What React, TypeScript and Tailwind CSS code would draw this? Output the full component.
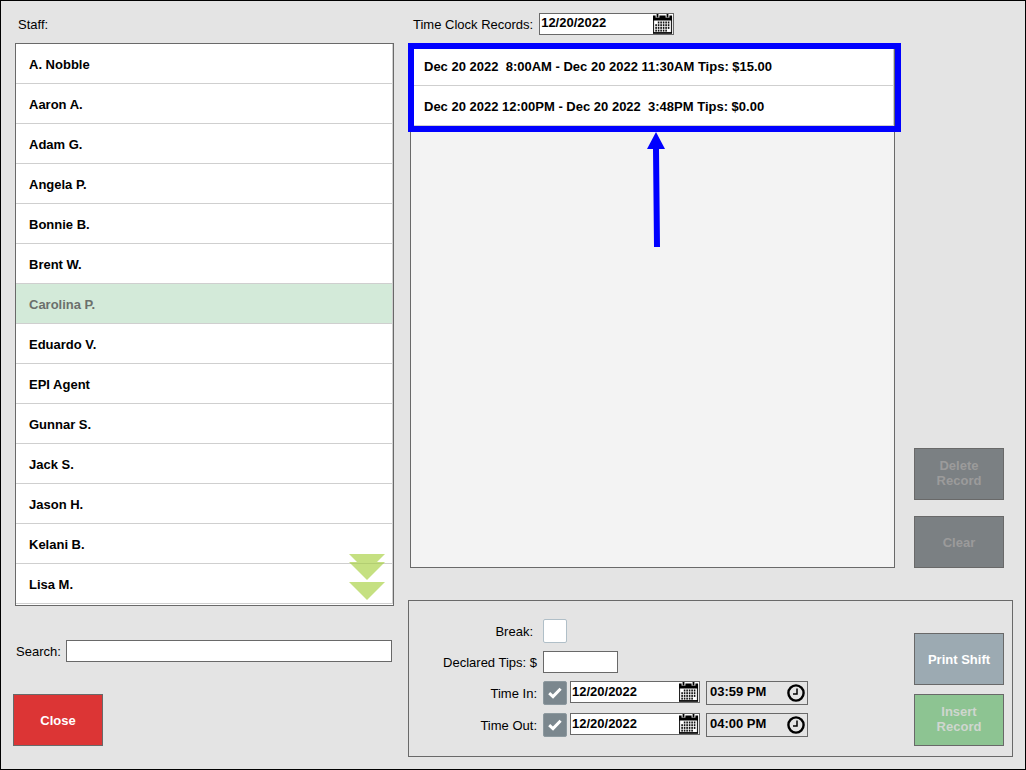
import { useState } from 'react';

const staffList = [
  'A. Nobble',
  'Aaron A.',
  'Adam G.',
  'Angela P.',
  'Bonnie B.',
  'Brent W.',
  'Carolina P.',
  'Eduardo V.',
  'EPI Agent',
  'Gunnar S.',
  'Jack S.',
  'Jason H.',
  'Kelani B.',
  'Lisa M.',
];

const records = [
  'Dec 20 2022  8:00AM - Dec 20 2022 11:30AM Tips: $15.00',
  'Dec 20 2022 12:00PM - Dec 20 2022  3:48PM Tips: $0.00',
];

// first and last column of the days filled in on each week row
const weeks = [
  [1, 5],
  [0, 5],
  [0, 5],
  [0, 4],
];

const CalendarIcon = () => (
  <svg className="size-5" viewBox="0 0 20 20" aria-hidden="true">
    <rect x="0.5" y="3" width="18" height="16" fill="#fff" stroke="#222" strokeWidth="1.2" />
    <rect x="0" y="1.5" width="19" height="5" fill="#000" />
    <rect x="0" y="18.2" width="19" height="1.4" fill="#000" />
    <rect x="2.6" y="0" width="3.8" height="3.6" fill="#fff" />
    <rect x="12.6" y="0" width="3.8" height="3.6" fill="#fff" />
    <rect x="3.6" y="0" width="1.8" height="3.4" fill="#000" />
    <rect x="13.6" y="0" width="1.8" height="3.4" fill="#000" />
    {weeks.map(([from, to], row) =>
      [0, 1, 2, 3, 4, 5].filter((col) => col >= from && col <= to).map((col) => (
        <rect key={`${row}-${col}`} x={2.3 + col * 2.5} y={7.5 + row * 2.7} width="1.6" height="2" fill="#111" />
      ))
    )}
  </svg>
);

const ClockIcon = () => (
  <svg className="size-[18px]" viewBox="0 0 18 18" fill="none" stroke="#000" aria-hidden="true">
    <circle cx="9" cy="9" r="7.6" strokeWidth="2.4" />
    <path d="M10 4.5V10H6" strokeWidth="1.5" />
  </svg>
);

const DateField = ({ label, id, className }: { label: string; id: string; className: string }) => (
  <div className={`flex h-[22px] items-center border border-[#696969] bg-white ${className}`}>
    <input id={id} aria-label={label} defaultValue="12/20/2022" className="h-full min-w-0 flex-1 px-px pb-0.5 font-bold outline-none" />
    <button type="button" aria-label={`Pick ${label}`}><CalendarIcon /></button>
  </div>
);

const TimeRow = ({ label, id, time }: { label: string; id: string; time: string }) => (
  <>
    <label htmlFor={id} className="pt-0.5 pr-1.5 text-right">{label}:</label>
    <div className="flex h-6 items-start">
      <span className="relative mr-[3px] size-6">
        <input id={id} type="checkbox" defaultChecked className="block size-6 appearance-none rounded-xs border border-[#8d999f] bg-[#7b878e]" />
        <svg className="pointer-events-none absolute left-[5px] top-[6px] h-3 w-[14px]" viewBox="0 0 14 12" fill="none" stroke="#fff" strokeWidth="3" aria-hidden="true">
          <path d="M1.2 6.2L5 9.6L12.6 1.8" />
        </svg>
      </span>
      <DateField id={`${id}-date`} label={`${label} date`} className="w-[130px]" />
      <div className="ml-1.5 flex h-6 w-[102px] items-center border border-[#696969]">
        <input aria-label={`${label} time`} defaultValue={time} className="h-full min-w-0 flex-1 px-[3px] pb-1 font-bold outline-none" />
        <button type="button" aria-label={`Pick ${label} time`} className="mr-0.5"><ClockIcon /></button>
      </div>
    </div>
  </>
);

const actionButton = 'h-[52px] w-[90px] border border-[#696969] px-3 leading-[15px] font-bold';

const App = () => {
  const [selected, setSelected] = useState('Carolina P.');

  return (
    <main className="flex min-h-screen gap-3.5 border border-black bg-[#e4e4e4] px-3 font-['Liberation_Sans',Arial,sans-serif] text-[13px] leading-4 text-black">
      <section className="flex w-[38.1%] flex-col">
        <h2 className="flex h-[42px] items-center pt-1.5 pl-[5px]">Staff:</h2>
        <div className="relative ml-0.5 border border-[#696969] bg-white pb-px">
          <ul>
            {staffList.map((name) => (
              <li key={name}>
                <button
                  onClick={() => setSelected(name)}
                  className={`block h-10 w-full border-r border-b border-[#cfcfcf] px-[13px] pt-0.5 text-left font-bold ${name === selected ? 'bg-[#d3ead9] text-[#6b706c]' : ''}`}
                >
                  {name}
                </button>
              </li>
            ))}
          </ul>
          <button aria-label="Scroll down" className="absolute right-2 bottom-[5px]">
            <svg className="block h-[46px] w-9" viewBox="0 0 36 46" fill="#c5e081" aria-hidden="true">
              <path d="M0 0H36L28 8H36L18 26L0 8H8Z" />
              <path d="M0 28H36L18 46Z" />
              <path d="M1.5 9.5H34.5" stroke="#b3ce72" />
            </svg>
          </button>
        </div>
        <div className="mt-[34px] flex items-center gap-[5px] pr-0.5 pl-[3px]">
          <label htmlFor="search" className="pt-0.5">Search:</label>
          <input id="search" className="h-[22px] min-w-0 flex-1 border border-[#696969] bg-white px-1" />
        </div>
        <button className={`${actionButton} mt-8 bg-[#dc3535] text-white`}>Close</button>
      </section>

      <section className="flex flex-1 flex-col pb-3">
        <div className="flex h-11 items-center gap-1.5 pt-px pl-[5px]">
          <label htmlFor="record-date" className="pt-0.5">Time Clock Records:</label>
          <DateField id="record-date" label="record date" className="w-[135px]" />
        </div>
        <div className="flex flex-1 items-stretch pr-[9px] pl-0.5">
          <div className="relative flex-1 border border-[#696969] bg-[#f3f3f3]">
            <ul>
              {records.map((record) => (
                <li key={record}>
                  <button className="block h-10 w-full border-r border-b border-[#cfcfcf] bg-white px-[13px] pt-0.5 text-left font-bold whitespace-pre">
                    {record}
                  </button>
                </li>
              ))}
            </ul>
            {/* callout around the records */}
            <div className="pointer-events-none absolute -top-[3px] -right-[7px] -left-[3px] h-[89px] border-[6px] border-[#0000ff]" />
            <svg className="pointer-events-none absolute top-[86px] left-1/2 h-[115px] w-[18px] -translate-x-[6px]" viewBox="0 0 18 115" fill="#0000ff" aria-hidden="true">
              <path d="M9 0L18 17H12L13 115H7L6 17H0Z" />
            </svg>
          </div>
          <div className="ml-[19px] flex flex-col justify-end gap-4">
            <button disabled className={`${actionButton} bg-[#7b8083] pb-0.5 text-[#9b9b9b]`}>Delete Record</button>
            <button disabled className={`${actionButton} bg-[#7b8083] text-[#9b9b9b]`}>Clear</button>
          </div>
        </div>

        <form className="mt-8 flex justify-between border border-[#696969] pt-[18px] pr-2" onSubmit={(e) => e.preventDefault()}>
          <div className="grid grid-cols-[134px_auto] content-start items-center gap-y-2 pb-[19px]">
            <label htmlFor="break" className="pt-0.5 pr-[10px] text-right">Break:</label>
            <input id="break" type="checkbox" className="size-6 appearance-none rounded-xs border border-[#b0bfc8] bg-white" />
            <label htmlFor="tips" className="pt-0.5 pr-1.5 text-right">Declared Tips: $</label>
            <input id="tips" className="h-[22px] w-[75px] border border-[#696969] bg-white px-1" />
            <TimeRow label="Time In" id="time-in" time="03:59 PM" />
            <TimeRow label="Time Out" id="time-out" time="04:00 PM" />
          </div>
          <div className="flex flex-col justify-end gap-[9px] pb-[10px]">
            <button type="button" className={`${actionButton} whitespace-nowrap bg-[#9caab2] text-white`}>Print Shift</button>
            <button type="button" disabled className={`${actionButton} bg-[#8dc492] pb-0.5 text-[#cfd6cf]`}>Insert Record</button>
          </div>
        </form>
      </section>
    </main>
  );
};

export default App;
